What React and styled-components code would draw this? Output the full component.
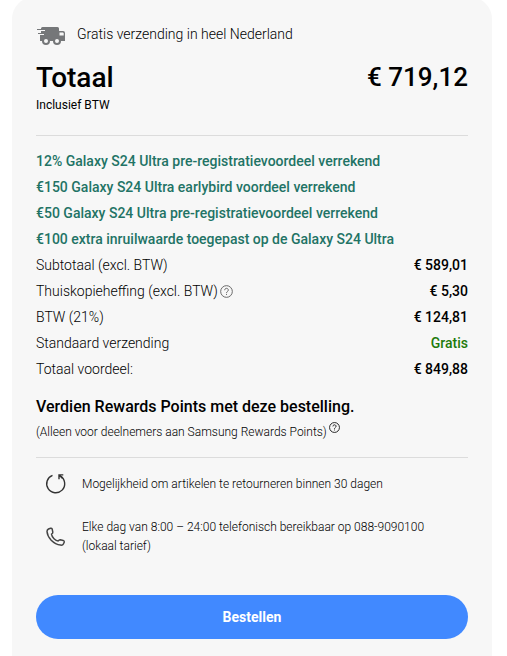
import React from "react";
import styled, { createGlobalStyle } from "styled-components";

const Global = createGlobalStyle`
  * { box-sizing: border-box; }
  body {
    margin: 0;
    background: #fff;
    color: #000;
    font-family: Roboto, "Liberation Sans", sans-serif;
    overflow: hidden;
  }
  h2, h3, p, dl, dt, dd, ul { margin: 0; padding: 0; }
`;

const Card = styled.section`
  margin: -3px 15px 0 12px;
  min-height: calc(100vh + 3px);
  padding: 24px 24px 17px;
  background: #f7f7f7;
  border-radius: 22px 22px 0 0;
`;

const Shipping = styled.p`
  display: flex;
  align-items: center;
  gap: 11px;
  height: 26px;
  font-size: 14px;
  font-weight: 300;
`;

const TotalRow = styled.div`
  display: flex;
  justify-content: space-between;
  align-items: center;
  height: 40px;
  margin-top: 10px;
`;

const TotalTitle = styled.h2`
  font-size: 28px;
  font-weight: 500;
`;

const TotalPrice = styled.strong`
  font-size: 26px;
  font-weight: 500;
`;

const TaxNote = styled.p`
  font-size: 12px;
  line-height: 16px;
  font-weight: 400;
`;

const Divider = styled.hr`
  height: 1px;
  margin: ${(p) => p.$space};
  border: 0;
  background: #dcdcdc;
`;

const Benefits = styled.ul`
  list-style: none;
  color: #227365;
  font-size: 14px;
  font-weight: 500;
  line-height: 26px;
`;

const Costs = styled.dl`
  font-size: 14px;
  line-height: 26px;
`;

const CostRow = styled.div`
  display: flex;
  justify-content: space-between;
`;

const Label = styled.dt`
  display: flex;
  align-items: center;
  gap: 2px;
  font-weight: 300;
`;

const Amount = styled.dd`
  color: ${(p) => (p.$free ? "#217a0b" : "#000")};
  font-weight: 500;
`;

const InfoButton = styled.button`
  display: flex;
  padding: 0;
  border: 0;
  background: none;
  color: ${(p) => p.$tone};
`;

const RewardsTitle = styled.h3`
  margin-top: 13px;
  font-size: 16px;
  font-weight: 500;
  line-height: 24px;
`;

const RewardsNote = styled.p`
  display: flex;
  align-items: flex-start;
  gap: 2px;
  margin-top: 3px;
  font-size: 12px;
  font-weight: 300;
  line-height: 20px;
`;

const Services = styled.ul`
  display: grid;
  gap: 23px;
  list-style: none;
`;

const Service = styled.li`
  display: flex;
  align-items: center;
  gap: 15px;
  padding-left: 9px;
  font-size: 12px;
  font-weight: 300;
  line-height: 19px;
`;

const OrderButton = styled.button`
  display: block;
  width: 100%;
  height: 44px;
  margin-top: 39px;
  border: 0;
  border-radius: 22px;
  background: #4189ff;
  color: #fff;
  font-family: inherit;
  font-size: 14px;
  font-weight: 700;
`;

const Truck = () => (
  <svg width="30" height="24" viewBox="0 -4 30 24" fill="#757779" aria-hidden="true">
    <path d="M6.500 1H21.500Q23 1 23 2.500V5H27Q29 5 29 7V15H4V9H8V8H5V5H9V4H5V2.500Q5 1 6.500 1Z" />
    <path d="M1 3.500H9M2 7.500H8" stroke="#757779" strokeWidth="1.200" />
    <path d="M23.500 6.500H27L27.700 7.500V9.500H23.500Z" fill="#f7f7f7" />
    <circle cx="10" cy="15" r="4" />
    <circle cx="21" cy="15" r="4" />
    <circle cx="10" cy="15" r="2" fill="#f7f7f7" />
    <circle cx="21" cy="15" r="2" fill="#f7f7f7" />
  </svg>
);

const Question = ({ size }) => (
  <svg width={size} height={size} viewBox="0 0 12 12" fill="none" stroke="currentColor" aria-hidden="true">
    <circle cx="6" cy="6" r="5.400" strokeWidth="0.900" />
    <path d="M4.300 4.800C4.300 2.500 7.700 2.500 7.700 4.700C7.700 6 6 6 6 7.400M6 8.200V9.200" strokeWidth="0.900" />
  </svg>
);

const ReturnIcon = () => (
  <svg width="22" height="22" viewBox="0 0 22 22" fill="none" stroke="#333" strokeWidth="1.400" aria-hidden="true">
    <path d="M7.500 2.400A9 9 0 1 0 15.500 3.200" />
    <path d="M18.300 1.900H14V6.200M14.200 2.100L17.400 5.300" />
  </svg>
);

const PhoneIcon = () => (
  <svg width="22" height="22" viewBox="0 0 22 22" fill="none" stroke="#444" strokeWidth="1.500" strokeLinejoin="round" aria-hidden="true">
    <path d="M3.500 3L5.600 2.200Q6.900 1.900 7.200 3.200L7.800 6.200Q8 7.400 6.500 8.200Q6.800 10.500 9 12.700Q11.200 14.900 13.200 15Q14 13.600 15.200 13.700L18.200 14.500Q19.500 14.900 19.300 16L18.400 18Q17.800 19.400 15.500 19.100Q10.500 18.500 6.200 14.200Q2.300 10 2 5.500Q2 3.800 3.500 3Z" />
  </svg>
);

const benefits = [
  "12% Galaxy S24 Ultra pre-registratievoordeel verrekend",
  "€150 Galaxy S24 Ultra earlybird voordeel verrekend",
  "€50 Galaxy S24 Ultra pre-registratievoordeel verrekend",
  "€100 extra inruilwaarde toegepast op de Galaxy S24 Ultra",
];

const costs = [
  { label: "Subtotaal (excl. BTW)", amount: "€ 589,01" },
  { label: "Thuiskopieheffing (excl. BTW)", amount: "€ 5,30", info: true },
  { label: "BTW (21%)", amount: "€ 124,81" },
  { label: "Standaard verzending", amount: "Gratis", free: true },
  { label: "Totaal voordeel:", amount: "€ 849,88" },
];

export default function App() {
  return (
    <>
      <Global />
      <Card>
        <Shipping>
          <Truck />
          Gratis verzending in heel Nederland
        </Shipping>
        <TotalRow>
          <TotalTitle>Totaal</TotalTitle>
          <TotalPrice>€ 719,12</TotalPrice>
        </TotalRow>
        <TaxNote>Inclusief BTW</TaxNote>
        <Divider $space="22px 0 12px" />
        <Benefits>
          {benefits.map((text) => (
            <li key={text}>{text}</li>
          ))}
        </Benefits>
        <Costs>
          {costs.map((row) => (
            <CostRow key={row.label}>
              <Label>
                {row.label}
                {row.info && (
                  <InfoButton type="button" aria-label="Meer informatie" $tone="#666">
                    <Question size={13} />
                  </InfoButton>
                )}
              </Label>
              <Amount $free={row.free}>{row.amount}</Amount>
            </CostRow>
          ))}
        </Costs>
        <RewardsTitle>Verdien Rewards Points met deze bestelling.</RewardsTitle>
        <RewardsNote>
          (Alleen voor deelnemers aan Samsung Rewards Points)
          <InfoButton type="button" aria-label="Meer informatie over Rewards" $tone="#000">
            <Question size={11} />
          </InfoButton>
        </RewardsNote>
        <Divider $space="15px 0" />
        <Services>
          <Service>
            <ReturnIcon />
            Mogelijkheid om artikelen te retourneren binnen 30 dagen
          </Service>
          <Service>
            <PhoneIcon />
            <span>
              Elke dag van 8:00 – 24:00 telefonisch bereikbaar op 088-9090100
              <br />
              (lokaal tarief)
            </span>
          </Service>
        </Services>
        <OrderButton type="button">Bestellen</OrderButton>
      </Card>
    </>
  );
}
